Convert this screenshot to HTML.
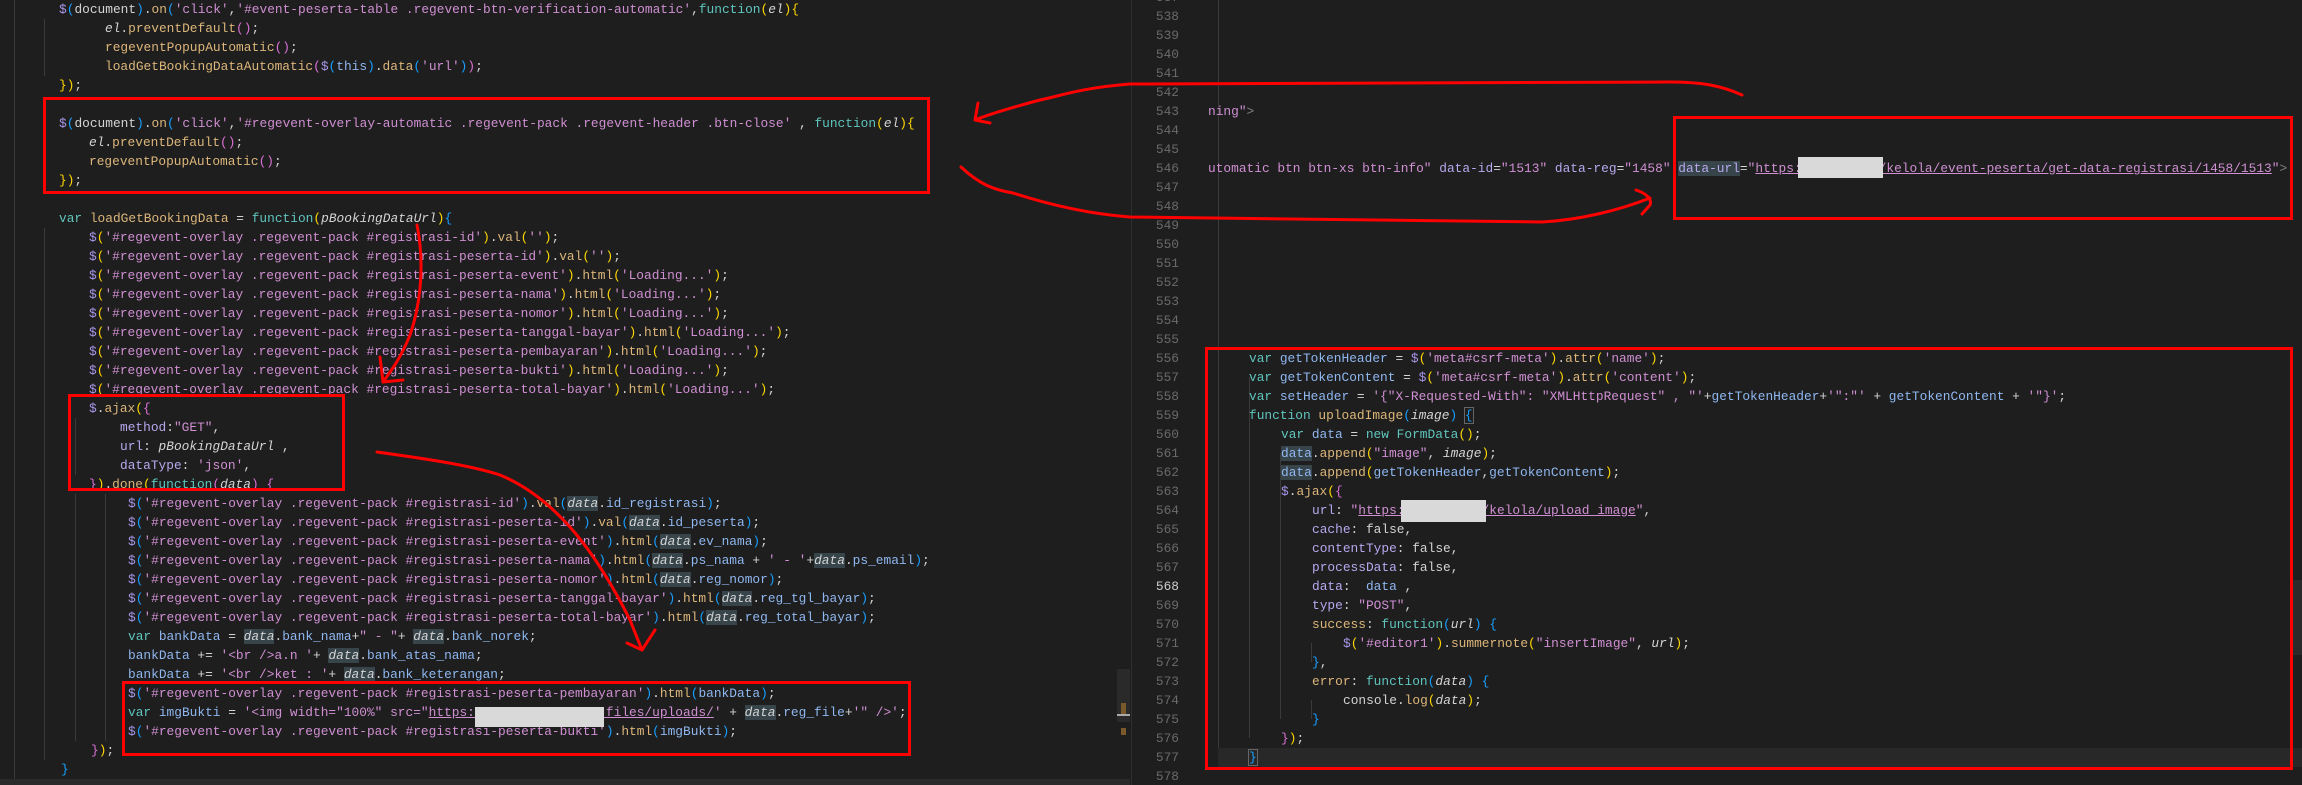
<!DOCTYPE html>
<html><head><meta charset="utf-8"><style>
html,body{margin:0;padding:0;background:#1e1e1e;width:2302px;height:785px;overflow:hidden;position:relative}
.l{position:absolute;white-space:pre;font-family:"Liberation Mono",monospace;font-size:12.85px;line-height:19px;height:19px;color:#d4d4d4}
.n{position:absolute;left:1130px;width:49px;text-align:right;font-family:"Liberation Mono",monospace;font-size:12.85px;line-height:19px;color:#6a6a6a}
.d{color:#a996e8}.f{color:#dcb67a}.s{color:#cf8fd2}.k{color:#5fc5bd}.v{color:#8fb7f0}.pr{color:#b8a8ee}
.i{font-style:italic;color:#d4d4d4}.y{color:#ffd700}.m{color:#da70d6}.b{color:#179fff}
.h{background:#37454b}.u{text-decoration:underline}
.bx{position:absolute;border:3px solid #f00;box-sizing:border-box}
.g{position:absolute;width:1px;background:#3a3a3a}
.bl{position:absolute;background:#d9d9d9}
</style></head><body>
<div style="position:absolute;left:1131px;top:0;width:1px;height:785px;background:#2e2e2e"></div>
<div style="position:absolute;left:1117px;top:669px;width:13px;height:53px;background:#2a2a2a"></div>
<div style="position:absolute;left:1121px;top:703px;width:5px;height:12px;background:#7a5a2a"></div>
<div style="position:absolute;left:1117px;top:714px;width:13px;height:2px;background:#aaa"></div>
<div style="position:absolute;left:1121px;top:728px;width:5px;height:7px;background:#7a5a2a"></div>
<div style="position:absolute;left:0;top:779px;width:1130px;height:6px;background:#2a2a2a"></div>
<div style="position:absolute;left:1218px;top:748px;width:1084px;height:19px;background:#282828"></div>
<div style="position:absolute;left:2292px;top:580px;width:10px;height:75px;background:#2a2a2a"></div>

<div class="g" style="left:14px;top:0;height:779px"></div>
<div class="g" style="left:44px;top:19px;height:57px"></div>
<div class="g" style="left:44px;top:133px;height:38px"></div>
<div class="g" style="left:44px;top:228px;height:532px"></div>
<div class="g" style="left:75px;top:418px;height:57px"></div>
<div class="g" style="left:75px;top:494px;height:247px"></div>
<div class="g" style="left:105px;top:494px;height:247px"></div>
<div class="g" style="left:1218px;top:0;height:748px"></div>
<div class="g" style="left:1249px;top:377px;height:361px"></div>
<div class="g" style="left:1280px;top:453px;height:266px"></div>
<div class="g" style="left:1311px;top:643px;height:19px"></div>
<div class="g" style="left:1311px;top:700px;height:19px"></div>

<!-- LEFT -->
<div class="l" style="left:59px;top:0px"><span class="d">$</span><span class="b">(</span>document<span class="b">)</span>.<span class="f">on</span><span class="b">(</span><span class="s">'click'</span>,<span class="s">'#event-peserta-table .regevent-btn-verification-automatic'</span>,<span class="k">function</span><span class="y">(</span><span class="i">el</span><span class="y">){</span></div>
<div class="l" style="left:105px;top:19px"><span class="i">el</span>.<span class="f">preventDefault</span><span class="m">()</span>;</div>
<div class="l" style="left:105px;top:38px"><span class="f">regeventPopupAutomatic</span><span class="m">()</span>;</div>
<div class="l" style="left:105px;top:57px"><span class="f">loadGetBookingDataAutomatic</span><span class="m">(</span><span class="d">$</span><span class="b">(</span><span class="v">this</span><span class="b">)</span>.<span class="f">data</span><span class="b">(</span><span class="s">'url'</span><span class="b">)</span><span class="m">)</span>;</div>
<div class="l" style="left:59px;top:76px"><span class="y">})</span>;</div>
<div class="l" style="left:59px;top:114px"><span class="d">$</span><span class="b">(</span>document<span class="b">)</span>.<span class="f">on</span><span class="b">(</span><span class="s">'click'</span>,<span class="s">'#regevent-overlay-automatic .regevent-pack .regevent-header .btn-close'</span> , <span class="k">function</span><span class="y">(</span><span class="i">el</span><span class="y">){</span></div>
<div class="l" style="left:89px;top:133px"><span class="i">el</span>.<span class="f">preventDefault</span><span class="m">()</span>;</div>
<div class="l" style="left:89px;top:152px"><span class="f">regeventPopupAutomatic</span><span class="m">()</span>;</div>
<div class="l" style="left:59px;top:171px"><span class="y">})</span>;</div>
<div class="l" style="left:59px;top:209px"><span class="k">var</span> <span class="f">loadGetBookingData</span> = <span class="k">function</span><span class="y">(</span><span class="i">pBookingDataUrl</span><span class="y">)</span><span class="b">{</span></div>
<div class="l" style="left:89px;top:228px"><span class="d">$</span><span class="y">(</span><span class="s">'#regevent-overlay .regevent-pack #registrasi-id'</span><span class="y">)</span>.<span class="f">val</span><span class="y">(</span><span class="s">''</span><span class="y">)</span>;</div>
<div class="l" style="left:89px;top:247px"><span class="d">$</span><span class="y">(</span><span class="s">'#regevent-overlay .regevent-pack #registrasi-peserta-id'</span><span class="y">)</span>.<span class="f">val</span><span class="y">(</span><span class="s">''</span><span class="y">)</span>;</div>
<div class="l" style="left:89px;top:266px"><span class="d">$</span><span class="y">(</span><span class="s">'#regevent-overlay .regevent-pack #registrasi-peserta-event'</span><span class="y">)</span>.<span class="f">html</span><span class="y">(</span><span class="s">'Loading...'</span><span class="y">)</span>;</div>
<div class="l" style="left:89px;top:285px"><span class="d">$</span><span class="y">(</span><span class="s">'#regevent-overlay .regevent-pack #registrasi-peserta-nama'</span><span class="y">)</span>.<span class="f">html</span><span class="y">(</span><span class="s">'Loading...'</span><span class="y">)</span>;</div>
<div class="l" style="left:89px;top:304px"><span class="d">$</span><span class="y">(</span><span class="s">'#regevent-overlay .regevent-pack #registrasi-peserta-nomor'</span><span class="y">)</span>.<span class="f">html</span><span class="y">(</span><span class="s">'Loading...'</span><span class="y">)</span>;</div>
<div class="l" style="left:89px;top:323px"><span class="d">$</span><span class="y">(</span><span class="s">'#regevent-overlay .regevent-pack #registrasi-peserta-tanggal-bayar'</span><span class="y">)</span>.<span class="f">html</span><span class="y">(</span><span class="s">'Loading...'</span><span class="y">)</span>;</div>
<div class="l" style="left:89px;top:342px"><span class="d">$</span><span class="y">(</span><span class="s">'#regevent-overlay .regevent-pack #registrasi-peserta-pembayaran'</span><span class="y">)</span>.<span class="f">html</span><span class="y">(</span><span class="s">'Loading...'</span><span class="y">)</span>;</div>
<div class="l" style="left:89px;top:361px"><span class="d">$</span><span class="y">(</span><span class="s">'#regevent-overlay .regevent-pack #registrasi-peserta-bukti'</span><span class="y">)</span>.<span class="f">html</span><span class="y">(</span><span class="s">'Loading...'</span><span class="y">)</span>;</div>
<div class="l" style="left:89px;top:380px"><span class="d">$</span><span class="y">(</span><span class="s">'#regevent-overlay .regevent-pack #registrasi-peserta-total-bayar'</span><span class="y">)</span>.<span class="f">html</span><span class="y">(</span><span class="s">'Loading...'</span><span class="y">)</span>;</div>
<div class="l" style="left:89px;top:399px"><span class="d">$</span>.<span class="f">ajax</span><span class="y">(</span><span class="m">{</span></div>
<div class="l" style="left:120px;top:418px"><span class="pr">method</span>:<span class="s">"GET"</span>,</div>
<div class="l" style="left:120px;top:437px"><span class="pr">url</span>: <span class="i">pBookingDataUrl</span> ,</div>
<div class="l" style="left:120px;top:456px"><span class="pr">dataType</span>: <span class="s">'json'</span>,</div>
<div class="l" style="left:89px;top:475px"><span class="m">}</span><span class="y">)</span>.<span class="f">done</span><span class="y">(</span><span class="k">function</span><span class="m">(</span><span class="i">data</span><span class="m">)</span> <span class="m">{</span></div>
<div class="l" style="left:128px;top:494px"><span class="d">$</span><span class="b">(</span><span class="s">'#regevent-overlay .regevent-pack #registrasi-id'</span><span class="b">)</span>.<span class="f">val</span><span class="b">(</span><span class="i h">data</span>.<span class="v">id_registrasi</span><span class="b">)</span>;</div>
<div class="l" style="left:128px;top:513px"><span class="d">$</span><span class="b">(</span><span class="s">'#regevent-overlay .regevent-pack #registrasi-peserta-id'</span><span class="b">)</span>.<span class="f">val</span><span class="b">(</span><span class="i h">data</span>.<span class="v">id_peserta</span><span class="b">)</span>;</div>
<div class="l" style="left:128px;top:532px"><span class="d">$</span><span class="b">(</span><span class="s">'#regevent-overlay .regevent-pack #registrasi-peserta-event'</span><span class="b">)</span>.<span class="f">html</span><span class="b">(</span><span class="i h">data</span>.<span class="v">ev_nama</span><span class="b">)</span>;</div>
<div class="l" style="left:128px;top:551px"><span class="d">$</span><span class="b">(</span><span class="s">'#regevent-overlay .regevent-pack #registrasi-peserta-nama'</span><span class="b">)</span>.<span class="f">html</span><span class="b">(</span><span class="i h">data</span>.<span class="v">ps_nama</span> + <span class="s">' - '</span>+<span class="i h">data</span>.<span class="v">ps_email</span><span class="b">)</span>;</div>
<div class="l" style="left:128px;top:570px"><span class="d">$</span><span class="b">(</span><span class="s">'#regevent-overlay .regevent-pack #registrasi-peserta-nomor'</span><span class="b">)</span>.<span class="f">html</span><span class="b">(</span><span class="i h">data</span>.<span class="v">reg_nomor</span><span class="b">)</span>;</div>
<div class="l" style="left:128px;top:589px"><span class="d">$</span><span class="b">(</span><span class="s">'#regevent-overlay .regevent-pack #registrasi-peserta-tanggal-bayar'</span><span class="b">)</span>.<span class="f">html</span><span class="b">(</span><span class="i h">data</span>.<span class="v">reg_tgl_bayar</span><span class="b">)</span>;</div>
<div class="l" style="left:128px;top:608px"><span class="d">$</span><span class="b">(</span><span class="s">'#regevent-overlay .regevent-pack #registrasi-peserta-total-bayar'</span><span class="b">)</span>.<span class="f">html</span><span class="b">(</span><span class="i h">data</span>.<span class="v">reg_total_bayar</span><span class="b">)</span>;</div>
<div class="l" style="left:128px;top:627px"><span class="k">var</span> <span class="v">bankData</span> = <span class="i h">data</span>.<span class="v">bank_nama</span>+<span class="s">" - "</span>+ <span class="i h">data</span>.<span class="v">bank_norek</span>;</div>
<div class="l" style="left:128px;top:646px"><span class="v">bankData</span> += <span class="s">'&lt;br /&gt;a.n '</span>+ <span class="i h">data</span>.<span class="v">bank_atas_nama</span>;</div>
<div class="l" style="left:128px;top:665px"><span class="v">bankData</span> += <span class="s">'&lt;br /&gt;ket : '</span>+ <span class="i h">data</span>.<span class="v">bank_keterangan</span>;</div>
<div class="l" style="left:128px;top:684px"><span class="d">$</span><span class="b">(</span><span class="s">'#regevent-overlay .regevent-pack #registrasi-peserta-pembayaran'</span><span class="b">)</span>.<span class="f">html</span><span class="b">(</span><span class="v">bankData</span><span class="b">)</span>;</div>
<div class="l" style="left:128px;top:703px"><span class="k">var</span> <span class="v">imgBukti</span> = <span class="s">'&lt;img width="100%" src="<span class="u">https:                 files/uploads/</span>'</span> + <span class="i h">data</span>.<span class="v">reg_file</span>+<span class="s">'" /&gt;'</span>;</div>
<div class="l" style="left:128px;top:722px"><span class="d">$</span><span class="b">(</span><span class="s">'#regevent-overlay .regevent-pack #registrasi-peserta-bukti'</span><span class="b">)</span>.<span class="f">html</span><span class="b">(</span><span class="v">imgBukti</span><span class="b">)</span>;</div>
<div class="l" style="left:91px;top:741px"><span class="m">}</span><span class="y">)</span>;</div>
<div class="l" style="left:61px;top:760px"><span class="b">}</span></div>
<div class="bl" style="left:475px;top:707px;width:129px;height:20px"></div>

<!-- RIGHT line numbers -->
<div class="n" style="top:-12px">537</div><div class="n" style="top:7px">538</div><div class="n" style="top:26px">539</div><div class="n" style="top:45px">540</div><div class="n" style="top:64px">541</div><div class="n" style="top:83px">542</div><div class="n" style="top:102px">543</div><div class="n" style="top:121px">544</div><div class="n" style="top:140px">545</div><div class="n" style="top:159px">546</div><div class="n" style="top:178px">547</div><div class="n" style="top:197px">548</div><div class="n" style="top:216px">549</div><div class="n" style="top:235px">550</div><div class="n" style="top:254px">551</div><div class="n" style="top:273px">552</div><div class="n" style="top:292px">553</div><div class="n" style="top:311px">554</div><div class="n" style="top:330px">555</div><div class="n" style="top:349px">556</div><div class="n" style="top:368px">557</div><div class="n" style="top:387px">558</div><div class="n" style="top:406px">559</div><div class="n" style="top:425px">560</div><div class="n" style="top:444px">561</div><div class="n" style="top:463px">562</div><div class="n" style="top:482px">563</div><div class="n" style="top:501px">564</div><div class="n" style="top:520px">565</div><div class="n" style="top:539px">566</div><div class="n" style="top:558px">567</div><div class="n" style="top:577px;color:#cfcfcf">568</div><div class="n" style="top:596px">569</div><div class="n" style="top:615px">570</div><div class="n" style="top:634px">571</div><div class="n" style="top:653px">572</div><div class="n" style="top:672px">573</div><div class="n" style="top:691px">574</div><div class="n" style="top:710px">575</div><div class="n" style="top:729px">576</div><div class="n" style="top:748px">577</div><div class="n" style="top:767px">578</div>

<!-- RIGHT code -->
<div class="l" style="left:1208px;top:102px"><span class="s">ning"</span><span style="color:#808080">&gt;</span></div>
<div class="l" style="left:1208px;top:159px"><span class="s">utomatic btn btn-xs btn-info"</span> <span class="pr">data-id</span>=<span class="s">"1513"</span> <span class="pr">data-reg</span>=<span class="s">"1458"</span> <span class="pr h">data-url</span>=<span class="s">"<span class="u">https:          /kelola/event-peserta/get-data-registrasi/1458/1513</span>"</span><span style="color:#808080">&gt;</span></div>
<div class="bl" style="left:1798px;top:157px;width:85px;height:21px"></div>
<div class="l" style="left:1249px;top:349px"><span class="k">var</span> <span class="v">getTokenHeader</span> = <span class="d">$</span><span class="y">(</span><span class="s">'meta#csrf-meta'</span><span class="y">)</span>.<span class="f">attr</span><span class="y">(</span><span class="s">'name'</span><span class="y">)</span>;</div>
<div class="l" style="left:1249px;top:368px"><span class="k">var</span> <span class="v">getTokenContent</span> = <span class="d">$</span><span class="y">(</span><span class="s">'meta#csrf-meta'</span><span class="y">)</span>.<span class="f">attr</span><span class="y">(</span><span class="s">'content'</span><span class="y">)</span>;</div>
<div class="l" style="left:1249px;top:387px"><span class="k">var</span> <span class="v">setHeader</span> = <span class="s">'{"X-Requested-With": "XMLHttpRequest" , "'</span>+<span class="v">getTokenHeader</span>+<span class="s">'":"'</span> + <span class="v">getTokenContent</span> + <span class="s">'"}'</span>;</div>
<div class="l" style="left:1249px;top:406px"><span class="k">function</span> <span class="f">uploadImage</span><span class="b">(</span><span class="i">image</span><span class="b">)</span> <span class="b" style="outline:1px solid #666">{</span></div>
<div class="l" style="left:1281px;top:425px"><span class="k">var</span> <span class="v">data</span> = <span class="k">new</span> <span class="k">FormData</span><span class="y">()</span>;</div>
<div class="l" style="left:1281px;top:444px"><span class="v h">data</span>.<span class="f">append</span><span class="y">(</span><span class="s">"image"</span>, <span class="i">image</span><span class="y">)</span>;</div>
<div class="l" style="left:1281px;top:463px"><span class="v h">data</span>.<span class="f">append</span><span class="y">(</span><span class="v">getTokenHeader</span>,<span class="v">getTokenContent</span><span class="y">)</span>;</div>
<div class="l" style="left:1281px;top:482px"><span class="d">$</span>.<span class="f">ajax</span><span class="y">(</span><span class="m">{</span></div>
<div class="l" style="left:1312px;top:501px"><span class="pr">url</span>: <span class="s">"<span class="u">https:          /kelola/upload_image</span>"</span>,</div>
<div class="bl" style="left:1401px;top:500px;width:85px;height:22px"></div>
<div class="l" style="left:1312px;top:520px"><span class="pr">cache</span>: false,</div>
<div class="l" style="left:1312px;top:539px"><span class="pr">contentType</span>: false,</div>
<div class="l" style="left:1312px;top:558px"><span class="pr">processData</span>: false,</div>
<div class="l" style="left:1312px;top:577px"><span class="pr">data</span>:  <span class="v">data</span> ,</div>
<div class="l" style="left:1312px;top:596px"><span class="pr">type</span>: <span class="s">"POST"</span>,</div>
<div class="l" style="left:1312px;top:615px"><span class="f">success</span>: <span class="k">function</span><span class="b">(</span><span class="i">url</span><span class="b">)</span> <span class="b">{</span></div>
<div class="l" style="left:1343px;top:634px"><span class="d">$</span><span class="y">(</span><span class="s">'#editor1'</span><span class="y">)</span>.<span class="f">summernote</span><span class="y">(</span><span class="s">"insertImage"</span>, <span class="i">url</span><span class="y">)</span>;</div>
<div class="l" style="left:1312px;top:653px"><span class="b">}</span>,</div>
<div class="l" style="left:1312px;top:672px"><span class="f">error</span>: <span class="k">function</span><span class="b">(</span><span class="i">data</span><span class="b">)</span> <span class="b">{</span></div>
<div class="l" style="left:1343px;top:691px">console.<span class="f">log</span><span class="y">(</span><span class="i">data</span><span class="y">)</span>;</div>
<div class="l" style="left:1312px;top:710px"><span class="b">}</span></div>
<div class="l" style="left:1281px;top:729px"><span class="m">}</span><span class="y">)</span>;</div>
<div class="l" style="left:1249px;top:748px"><span class="b" style="outline:1px solid #666">}</span></div>

<!-- red boxes -->
<div class="bx" style="left:43px;top:97px;width:887px;height:97px"></div>
<div class="bx" style="left:68px;top:394px;width:277px;height:97px"></div>
<div class="bx" style="left:122px;top:681px;width:789px;height:75px"></div>
<div class="bx" style="left:1673px;top:116px;width:620px;height:104px"></div>
<div class="bx" style="left:1205px;top:347px;width:1088px;height:423px"></div>

<svg width="2302" height="785" style="position:absolute;left:0;top:0" fill="none" stroke="#f00" stroke-width="3" stroke-linecap="round" stroke-linejoin="round">
<path d="M1742,95 C1720,85 1700,82 1669,82 L1130,84 C1080,88 1060,96 1040,100 C1010,108 990,114 975,120"/>
<path d="M978,103 L975,120 L990,123"/>
<path d="M961,167 C980,185 995,190 1013,193 C1050,205 1090,214 1130,217 L1542,222 C1580,220 1620,210 1650,198"/>
<path d="M1636,190 C1648,194 1652,200 1650,205 L1642,214"/>
<path d="M417,225 C424,260 422,300 410,335 C400,360 390,372 383,382"/>
<path d="M380,357 L383,382 L403,380"/>
<path d="M377,452 C420,458 470,465 500,475 C560,500 600,560 630,620 L642,650"/>
<path d="M627,643 L642,650 L655,630"/>
</svg>
</body></html>
